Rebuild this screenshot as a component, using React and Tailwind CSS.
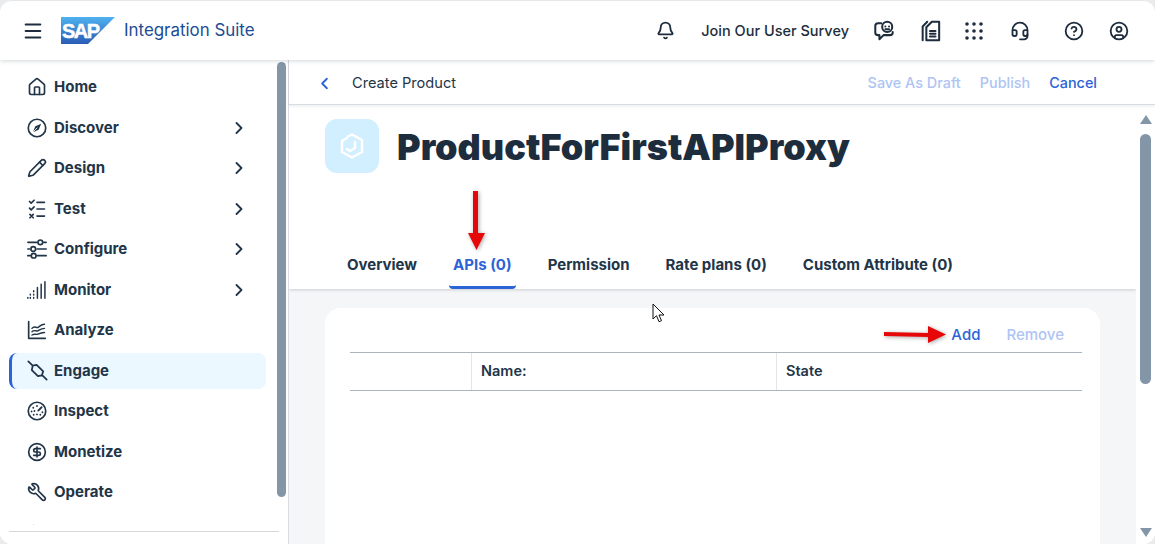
import React from 'react';
import {
  House, Pencil, CircleDollarSign, Wrench,
  ChevronRight, ChevronLeft, Bell, Headset, CircleHelp, CircleUser, Menu,
} from 'lucide-react';

const Svg = ({ children, size = 20, sw = 2 }) => (
  <svg width={size} height={size} viewBox="0 0 24 24" fill="none" stroke="currentColor" strokeWidth={sw} strokeLinecap="round" strokeLinejoin="round">
    {children}
  </svg>
);

const CompassIcon = () => (
  <Svg>
    <circle cx="12" cy="12" r="10.500" />
    <path d="M7 17l3-7 7-3-3 7z" fill="currentColor" stroke="none" />
    <path d="M7 17l5-5" stroke="#fff" strokeWidth="1" />
  </Svg>
);

const TestIcon = () => (
  <Svg>
    <path d="M3 3l2 2 3.500-3.500M3 11l2 2 3.500-3.500M3.500 18.500l4 4M7.500 18.500l-4 4M12 4h9M12 12h9M12 20.500h9" />
  </Svg>
);

const ConfigureIcon = () => (
  <Svg>
    <path d="M1 4h11M1 20h3M1 12h2M12 12h11M12 20h11M20 4h3" />
    <circle cx="16" cy="4" r="2.800" />
    <circle cx="7.500" cy="12" r="2.800" />
    <circle cx="8" cy="20" r="2.800" />
  </Svg>
);

const MonitorIcon = () => (
  <Svg sw={1.800}>
    <path d="M21.500 2v20M17 5v17M12.500 9v13M8 13v1M8 17v1M8 21v1M4 17v1M4 21v1M1 21v1" />
  </Svg>
);

const AnalyzeIcon = () => (
  <Svg>
    <path d="M2 2v20h20" />
    <path d="M6 10c3-4 5 0 7-1s4-4 8-4M6 14c3-3 5 0 7-1s4-3 8-3M6 18c3-2 5 0 7-1s4-2 8-2" strokeWidth="1.700" />
  </Svg>
);

const EngageIcon = () => (
  <Svg size={21}>
    <path d="M1.500 1.500l5 5M17 17l5.500 5.500M6.500 6.500L11 5.500l7.500 7.500-1.500 4.500-4.500 1-7-7z" />
  </Svg>
);

const InspectIcon = () => (
  <Svg>
    <circle cx="12" cy="12" r="10.500" />
    <path d="M12 6v.1M7.500 8v.1M17.500 7.500l-4 4M5.500 12.500v.1M9 12v.1M12 16v.1M8 16.500v.1M18.500 13.500v.1M16 16.500v.1" strokeWidth="2.200" />
  </Svg>
);

// only the tip of this one shows above the clip line
const ClippedIcon = () => (
  <Svg>
    <path d="M5 5h6M8 3v4" />
  </Svg>
);

const SurveyIcon = () => (
  <Svg size={22} sw={2.200}>
    <path d="M9 3.500H5.500A3 3 0 0 0 2.500 6.500v7a3 3 0 0 0 3 3H7v4.500l4.500-4.500h7a3 3 0 0 0 3-3V13" />
    <circle cx="15.500" cy="7.500" r="5.500" />
    <path d="M13.500 7v.1M17.500 7v.1M13.500 10h4" />
  </Svg>
);

const FilesIcon = () => (
  <Svg size={22} sw={2.200}>
    <path d="M8 22V8l6-6h8v20zM4 22V7l5-5M12 12h6M12 15h6M12 18h6" />
  </Svg>
);

const GridIcon = () => (
  <svg width="18" height="18" viewBox="0 0 18 18" fill="currentColor">
    {[2, 9, 16].flatMap((y) => [2, 9, 16].map((x) => <circle key={`${x}-${y}`} cx={x} cy={y} r="1.800" />))}
  </svg>
);

const nav = [
  { label: 'Home', icon: <House size={20} /> },
  { label: 'Discover', icon: <CompassIcon />, more: true },
  { label: 'Design', icon: <Pencil size={20} />, more: true },
  { label: 'Test', icon: <TestIcon />, more: true },
  { label: 'Configure', icon: <ConfigureIcon />, more: true },
  { label: 'Monitor', icon: <MonitorIcon />, more: true },
  { label: 'Analyze', icon: <AnalyzeIcon /> },
  { label: 'Engage', icon: <EngageIcon />, active: true },
  { label: 'Inspect', icon: <InspectIcon /> },
  { label: 'Monetize', icon: <CircleDollarSign size={20} /> },
  { label: 'Operate', icon: <Wrench size={20} className="-scale-x-100" /> },
  { label: '', icon: <ClippedIcon /> },
];

const tabs = ['Overview', 'APIs (0)', 'Permission', 'Rate plans (0)', 'Custom Attribute (0)'];

const Header = () => (
  <header className="relative z-20 flex h-[60px] shrink-0 items-center rounded-t-xl border-t border-[#e5e7ea] bg-white pl-[22px] pr-[26px] shadow-[0_1px_4px_rgba(34,53,72,0.2)]">
    <Menu size={22} strokeWidth={2.200} className="text-[#1d2d3e]" />
    <svg width="54" height="27" viewBox="0 0 54 27" className="ml-[17px]">
      <defs>
        <linearGradient id="sap" x1="0" y1="0" x2="0" y2="1">
          <stop offset="0" stopColor="#4fb2f0" />
          <stop offset="1" stopColor="#2a5bb5" />
        </linearGradient>
      </defs>
      <polygon points="0,0 54,0 27,27 0,27" fill="url(#sap)" />
      <text x="1" y="21" fill="#fff" stroke="#fff" strokeWidth="0.500" fontFamily="Liberation Sans" fontWeight="700" fontSize="20" textLength="38">SAP</text>
    </svg>
    <span className="ml-[9px] pt-[1px] text-[16.900px] text-[#1b4b95]">Integration Suite</span>
    <div className="ml-auto flex items-center text-[#1d2d3e]">
      <Bell size={19} strokeWidth={2.300} />
      <span className="ml-[26px] pt-[1px] text-[14.500px] font-medium">Join Our User Survey</span>
      <div className="ml-[24px]"><SurveyIcon /></div>
      <div className="ml-[24px]"><FilesIcon /></div>
      <div className="ml-[24px]"><GridIcon /></div>
      <Headset size={20} strokeWidth={2.200} className="ml-[27px]" />
      <CircleHelp size={20} strokeWidth={2.200} className="ml-[34px]" />
      <CircleUser size={20} strokeWidth={2.200} className="ml-[25px]" />
    </div>
  </header>
);

const Sidebar = () => (
  <aside className="relative flex w-[289px] shrink-0 flex-col border-r border-[#d9dce0] bg-white">
    <div className="h-[465px] overflow-hidden pl-[9px] pt-[9px] pr-[22px]">
      <ul className="flex flex-col gap-[4.500px]">
        {nav.map((item, i) => (
          <li
            key={i}
            className={`flex h-9 shrink-0 items-center rounded-lg text-[#223548] ${item.active ? 'border-l-[3px] border-[#2c63d6] bg-[#ebf8ff] pl-[15px]' : 'pl-[18px]'}`}
          >
            <span className="flex w-[27px] shrink-0">{item.icon}</span>
            <span className="pt-[1px] text-[15px] font-bold">{item.label}</span>
            {item.more && <ChevronRight size={20} strokeWidth={2.200} className="ml-auto mr-[17px]" />}
          </li>
        ))}
      </ul>
    </div>
    <div className="absolute left-[277px] top-[2px] h-[435px] w-[9px] rounded-full bg-[#8396a8]" />
    <div className="mx-[9px] mt-[6px] h-px bg-[#d5d7da]" />
  </aside>
);

const Toolbar = () => (
  <div className="relative z-10 flex h-[45px] shrink-0 items-center border-b border-[#d9dce0] bg-white pl-[26px] pr-[58px] pt-[2px] shadow-[0_1px_3px_rgba(34,53,72,0.1)]">
    <ChevronLeft size={19} strokeWidth={2.300} className="text-[#2c63d6]" />
    <span className="ml-[18px] pt-[1px] text-[14.600px] text-[#223548]">Create Product</span>
    <div className="ml-auto flex items-center gap-[19px] text-[14.400px] font-medium">
      <span className="text-[#aec4f3]">Save As Draft</span>
      <span className="text-[#aec4f3]">Publish</span>
      <span className="text-[#2c63d6]">Cancel</span>
    </div>
  </div>
);

const ProductHead = () => (
  <div className="shrink-0 bg-white shadow-[0_1px_3px_rgba(34,53,72,0.2)]">
    <div className="flex items-start pl-[36px] pt-[14px]">
      <div className="flex h-[54px] w-[54px] items-center justify-center rounded-xl bg-[#d1efff]">
        <svg width="24" height="26" viewBox="0 0 24 26" fill="none" stroke="#fff" strokeWidth="2.500" strokeLinejoin="round" strokeLinecap="round">
          <path d="M8 3.500L12 1.500l10 5.500v12l-10 5.500-10-5.500V8l5-3" />
          <path d="M7 16l3 2 5-3V9" />
        </svg>
      </div>
      <h1 className="ml-[18px] text-[36px] font-black leading-[56px] text-[#1d2d3e]">ProductForFirstAPIProxy</h1>
    </div>
    <div className="mt-[54px] flex h-[60px] gap-[28px] pl-[54px]">
      {tabs.map((tab) => {
        const on = tab === 'APIs (0)';
        return (
          <div
            key={tab}
            className={`flex h-[60px] items-center border-b-[3px] px-[4px] pt-[16px] text-[15px] font-bold ${on ? 'rounded-b-sm border-[#2c63d6] text-[#2c63d6]' : 'border-transparent text-[#223548]'}`}
          >
            {tab}
          </div>
        );
      })}
    </div>
  </div>
);

const ApiTable = () => (
  <div className="ml-[36px] mr-[36px] mt-[19px] h-[300px] rounded-t-2xl bg-white pl-[25px] pr-[18px]">
    <div className="flex h-[44px] items-center justify-end gap-[26px] pr-[18px] pt-[10px] text-[15px] font-medium">
      <span className="text-[#2c63d6]">Add</span>
      <span className="text-[#aec4f3]">Remove</span>
    </div>
    <div className="flex h-[39px] border-y border-[#a9b4be] text-[14.500px] font-semibold text-[#223548]">
      <div className="w-[122px] border-r border-[#e5e5e5]" />
      <div className="flex w-[305px] items-center border-r border-[#e5e5e5] pb-[1px] pl-[9px]">Name:</div>
      <div className="flex items-center pb-[1px] pl-[9px]">State</div>
    </div>
  </div>
);

const ScrollBar = () => (
  <div className="flex w-[19px] shrink-0 flex-col items-center bg-white pt-[10px]">
    <div className="h-0 w-0 border-x-[6.500px] border-b-[9px] border-x-transparent border-b-[#8396a8]" />
    <div className="mt-[10px] h-[250px] w-[11px] rounded-full bg-[#8396a8]" />
    <div className="mt-auto mb-[7px] h-0 w-0 border-x-[6.500px] border-t-[9px] border-x-transparent border-t-[#8396a8]" />
  </div>
);

const RedArrow = ({ className, width, height, points }) => (
  <svg width={width} height={height} viewBox={`0 0 ${width} ${height}`} className={`absolute z-30 drop-shadow-[1px_1px_2px_rgba(0,0,0,0.35)] ${className}`}>
    <polygon points={points} fill="#e60808" />
  </svg>
);

const Cursor = () => (
  <svg width="14" height="20" viewBox="0 0 14 20" className="absolute left-[652px] top-[303px] z-30">
    <path d="M1 1v15l3.500-3.300 2.500 6 2.500-1-2.500-5.700h5z" fill="#fff" stroke="#111" strokeWidth="1" />
  </svg>
);

export default function App() {
  return (
    <div className="relative h-[544px] w-[1155px] overflow-hidden bg-[#e9ebed] font-['Inter','Noto_Sans',sans-serif]">
      <div className="flex h-full flex-col overflow-hidden rounded-xl bg-white">
        <Header />
        <div className="flex min-h-0 flex-1">
          <Sidebar />
          <main className="flex min-w-0 flex-1 flex-col">
            <Toolbar />
            <div className="flex min-h-0 flex-1">
              <div className="min-w-0 flex-1 overflow-hidden bg-[#f5f6f7]">
                <ProductHead />
                <ApiTable />
              </div>
              <ScrollBar />
            </div>
          </main>
        </div>
      </div>
      <RedArrow className="left-[467px] top-[190px]" width="19" height="61" points="6,1 11,1 11,43 18,43 9.500,60 1,43 6,43" />
      <RedArrow className="left-[883px] top-[325px]" width="65" height="20" points="1,7 45,8 45,1 63,9.500 45,18 45,12 1,11" />
      <Cursor />
    </div>
  );
}
